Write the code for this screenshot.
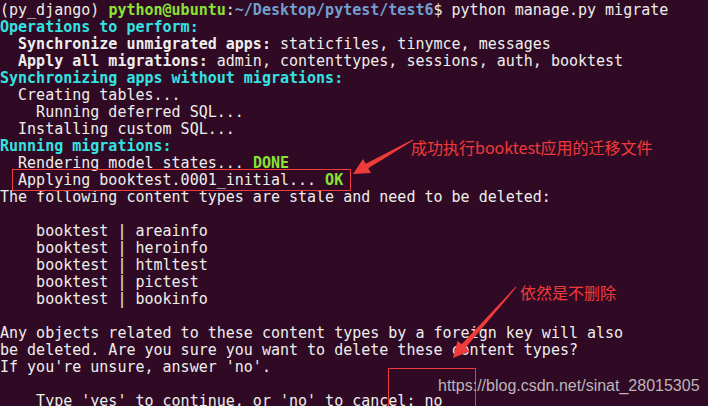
const staleTypes = ["areainfo", "heroinfo", "htmltest", "pictest", "bookinfo"];

function Line({ children }: { children?: React.ReactNode }) {
  return <div className="h-[17px] whitespace-pre leading-[17px]">{children ?? " "}</div>;
}

function Head({ children }: { children: React.ReactNode }) {
  return <span className="font-bold text-[#34e2e2]">{children}</span>;
}

export default function App() {
  return (
    <div className="relative h-[406px] w-[708px] overflow-hidden bg-[#300a24] pt-[2px] font-['DejaVu_Sans_Mono',monospace] text-[15px] text-[#eeeeec]">
      <Line>
        (py_django) <span className="font-bold text-[#8ae234]">python@ubuntu</span>:
        <span className="font-bold text-[#729fcf]">~/Desktop/pytest/test6</span>$ python manage.py migrate
      </Line>
      <Line>
        <Head>Operations to perform:</Head>
      </Line>
      <Line>
        {"  "}
        <b>Synchronize unmigrated apps:</b> staticfiles, tinymce, messages
      </Line>
      <Line>
        {"  "}
        <b>Apply all migrations:</b> admin, contenttypes, sessions, auth, booktest
      </Line>
      <Line>
        <Head>Synchronizing apps without migrations:</Head>
      </Line>
      <Line>{"  Creating tables..."}</Line>
      <Line>{"    Running deferred SQL..."}</Line>
      <Line>{"  Installing custom SQL..."}</Line>
      <Line>
        <Head>Running migrations:</Head>
      </Line>
      <Line>
        {"  Rendering model states... "}
        <span className="font-bold text-[#8ae234]">DONE</span>
      </Line>
      <Line>
        {"  Applying booktest.0001_initial... "}
        <span className="font-bold text-[#8ae234]">OK</span>
      </Line>
      <Line>The following content types are stale and need to be deleted:</Line>
      <Line />
      {staleTypes.map((t) => (
        <Line key={t}>{`    booktest | ${t}`}</Line>
      ))}
      <Line />
      <Line>Any objects related to these content types by a foreign key will also</Line>
      <Line>be deleted. Are you sure you want to delete these content types?</Line>
      <Line>If you're unsure, answer 'no'.</Line>
      <Line />
      <Line>{"    Type 'yes' to continue, or 'no' to cancel: no"}</Line>

      {/* annotations */}
      <div className="absolute left-[12px] top-[169px] h-[22px] w-[339px] border border-[#f03b3b]" />
      <div className="absolute left-[388px] top-[368px] h-[50px] w-[88px] border border-[#f03b3b]" />
      <svg className="pointer-events-none absolute left-0 top-0" width="708" height="406">
        <polygon
          fill="#f03b3b"
          points="353,174 363,159 365.8,163.8 412.8,139.6 413.2,140.4 368.2,168.2 371,173"
        />
        <polygon
          fill="#f03b3b"
          points="453,358 457.6,340.7 461.7,344.3 515.6,286.7 516.4,287.3 465.5,347.7 469.6,351.3"
        />
      </svg>
      <div className="absolute left-[411px] top-[138px] whitespace-nowrap font-['Noto_Sans_CJK_SC',sans-serif] text-[16px] leading-[18px] text-[#f23a3a]">
        成功执行booktest应用的迁移文件
      </div>
      <div className="absolute left-[520px] top-[283px] whitespace-nowrap font-['Noto_Sans_CJK_SC',sans-serif] text-[16px] leading-[18px] text-[#f23a3a]">
        依然是不删除
      </div>
      <div className="absolute left-[438px] top-[377px] whitespace-nowrap font-['Liberation_Sans',sans-serif] text-[16px] leading-[18px] text-[#bdb4ba]">
        https://blog.csdn.net/sinat_28015305
      </div>
    </div>
  );
}
